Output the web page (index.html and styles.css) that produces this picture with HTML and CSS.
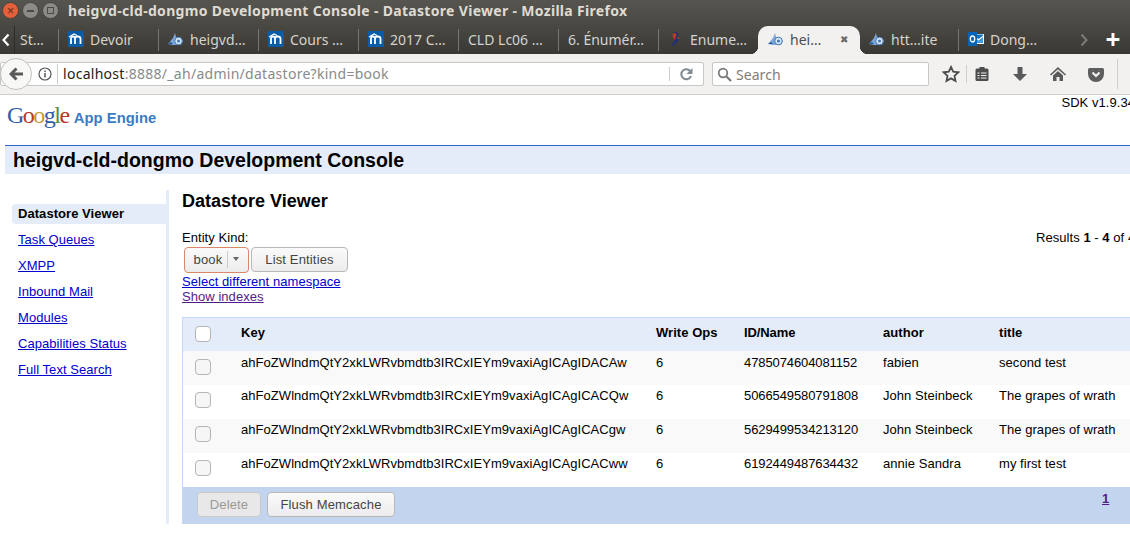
FILE: index.html
```html
<!DOCTYPE html>
<html lang="en">
<head>
  <meta charset="UTF-8">
  <title>heigvd-cld-dongmo Development Console - Datastore Viewer</title>
  <link rel="stylesheet" href="styles.css">
</head>
<body>
<svg class="defs" width="0" height="0">
  <symbol id="moodle" viewBox="0 0 16 16">
    <rect width="16" height="16" fill="#0a5ca8"/>
    <path d="M3 13V7.500C3 6 4 5.500 5 5.500s2 .5 2 2V13M7 7.500C7 6 8 5.500 9.500 5.500S12.500 6 12.500 7.500V13" fill="none" stroke="#fff" stroke-width="1.800"/>
    <path d="M1 6l5-3 3 1.500" fill="none" stroke="#fff" stroke-width="1.200"/>
  </symbol>
  <symbol id="engine" viewBox="0 0 16 16">
    <path d="M0 13L5 7l2-5 1 4 5 1 2 3-2 4H5z" fill="#7ea7d8"/>
    <circle cx="10.500" cy="10" r="3.800" fill="#dbe6f2" stroke="#3d78b8"/>
    <circle cx="10.500" cy="10" r="1.500" fill="#3d78b8"/>
    <path d="M0 13h5l-2-2z" fill="#1f5a9e"/>
  </symbol>
  <symbol id="bird" viewBox="0 0 16 16">
    <path d="M6 2c3-1 4 1 3 4L5 14c3-2 5-4 5-7" fill="none" stroke="#20307c" stroke-width="1.500"/>
    <path d="M5 3c2-2 4-1 3 2L7 9C5 7 4 5 5 3z" fill="#d92b2b"/>
    <path d="M9 6l4 2-4-.5z" fill="#d92b2b"/>
  </symbol>
</svg>

<div class="titlebar">
  <div class="winbtns">
    <span class="winbtn close">×</span>
    <span class="winbtn"><i class="dash"></i></span>
    <span class="winbtn"><i class="square"></i></span>
  </div>
  <div class="wintitle">heigvd-cld-dongmo Development Console - Datastore Viewer - Mozilla Firefox</div>
</div>

<div class="tabbar">
  <div class="tabscroll left"><svg width="8" height="14" viewBox="0 0 8 14"><path d="M6.500 1.500L1.500 7l5 5.500" fill="none" stroke="#fff" stroke-width="2.200"/></svg></div>
  <div class="tab first"><span class="tabtext">St…</span></div>
  <div class="tab"><svg class="favicon"><use href="#moodle"/></svg><span class="tabtext">Devoir</span></div>
  <div class="tab"><svg class="favicon"><use href="#engine"/></svg><span class="tabtext">heigvd…</span></div>
  <div class="tab"><svg class="favicon"><use href="#moodle"/></svg><span class="tabtext">Cours …</span></div>
  <div class="tab"><svg class="favicon"><use href="#moodle"/></svg><span class="tabtext">2017 C…</span></div>
  <div class="tab"><span class="tabtext">CLD Lc06 …</span></div>
  <div class="tab"><span class="tabtext">6. Énumér…</span></div>
  <div class="tab nosep"><svg class="favicon"><use href="#bird"/></svg><span class="tabtext">Enume…</span></div>
  <div class="tab active"><svg class="favicon"><use href="#engine"/></svg><span class="tabtext">hei…</span><span class="tabclose">✖</span></div>
  <div class="tab plain"><svg class="favicon"><use href="#engine"/></svg><span class="tabtext">htt…ite</span></div>
  <div class="tab last">
    <svg class="favicon" viewBox="0 0 16 16"><rect x="5" y="3" width="11" height="10" fill="#fff"/><path d="M6 4.500l4.500 3.500 4.500-3.500v-1H6z" fill="#0a6fc2"/><path d="M6 6l4.500 3.500L15 6v6H6z" fill="#3d9be0"/><rect y="1" width="9" height="14" fill="#0a62b0"/><ellipse cx="4.500" cy="8" rx="2.200" ry="3" fill="none" stroke="#fff" stroke-width="1.300"/></svg>
    <span class="tabtext">Dong…</span>
  </div>
  <div class="tabscroll right"><svg width="8" height="14" viewBox="0 0 8 14"><path d="M1.500 1.500l5 5.500-5 5.500" fill="none" stroke="#7d7b75" stroke-width="2"/></svg></div>
  <div class="newtab">+</div>
</div>

<div class="navbar">
  <div class="backbtn"><svg width="15" height="14" viewBox="0 0 15 14"><path d="M7.500 1.500L2 7l5.500 5.500M2.500 7H14" fill="none" stroke="#5a5a5a" stroke-width="3"/></svg></div>
  <div class="urlbar">
    <svg class="infoicon" width="14" height="14" viewBox="0 0 14 14"><circle cx="7" cy="7" r="6" fill="none" stroke="#555" stroke-width="1.200"/><path d="M7 6v4.500M7 3.500v1.400" stroke="#555" stroke-width="1.500"/></svg>
    <span class="urltext"><b>localhost</b>:8888/_ah/admin/datastore?kind=book</span>
    <svg class="reload" width="14" height="14" viewBox="0 0 14 14"><path d="M12 5.500A5 5 0 1 0 12 9" fill="none" stroke="#7f8a92" stroke-width="2"/><path d="M13.500 1v6h-6z" fill="#7f8a92"/></svg>
  </div>
  <div class="searchbar">
    <svg width="15" height="15" viewBox="0 0 15 15"><circle cx="6" cy="6" r="4.300" fill="none" stroke="#777" stroke-width="1.700"/><path d="M9.500 9.500l4.500 4.500" stroke="#777" stroke-width="2.200"/></svg>
    <span>Search</span>
  </div>
  <div class="navicons">
    <svg class="staricon" width="18" height="18" viewBox="0 0 18 18"><path d="M9 2l2.200 4.700 5.100.6-3.800 3.500 1 5.100L9 13.400 4.500 15.900l1-5.100L1.700 7.300l5.100-.6z" fill="none" stroke="#4d4d4d" stroke-width="1.800"/></svg>
    <span class="navsep"></span>
    <svg class="navicon" width="16" height="16" viewBox="0 0 16 16"><rect x="1.500" y="2.500" width="13" height="12.500" rx="1.500" fill="#4d4d4d"/><rect x="5.500" y="1" width="5" height="3" fill="#4d4d4d"/><path d="M3.500 7h2M7 7h5.500M3.500 9.500h2M7 9.500h5.500M3.500 12h2M7 12h5.500" stroke="#f2f1f0" stroke-width="1.100"/></svg>
    <svg class="navicon tight" width="16" height="16" viewBox="0 0 16 16"><path d="M5.500 1h5v7H15l-7 7-7-7h4.500z" fill="#5a5a5a"/></svg>
    <svg class="navicon tight" width="18" height="16" viewBox="0 0 18 16"><path d="M9 1L1 8.500l1 1L9 3.300l7 6.200 1-1z" fill="#5a5a5a"/><path d="M4 9.500L9 5l5 4.500V15h-3.500v-4h-3v4H4z" fill="#5a5a5a"/></svg>
    <svg class="navicon pocket" width="16" height="15" viewBox="0 0 16 15"><path d="M1.500 1h13A1.500 1.500 0 0 1 16 2.500V7a8 8 0 0 1-16 0V2.500A1.500 1.500 0 0 1 1.500 1z" fill="#5e5e5e"/><path d="M4.500 5.500L8 9l3.500-3.500" fill="none" stroke="#f2f1f0" stroke-width="2.200"/></svg>
    <span class="navsep last"></span>
  </div>
</div>

<div class="page">
  <div class="pagetop">
    <div class="logo">
      <span class="google"><span class="g-blue">G</span><span class="g-red">o</span><span class="g-yellow">o</span><span class="g-blue">g</span><span class="g-green">l</span><span class="g-red">e</span></span>
      <span class="appengine">App Engine</span>
    </div>
    <div class="sdk">SDK v1.9.34</div>
  </div>

  <h1 class="consoletitle">heigvd-cld-dongmo Development Console</h1>

  <div class="columns">
    <ul class="sidemenu">
      <li class="current">Datastore Viewer</li>
      <li><a href="#">Task Queues</a></li>
      <li><a href="#">XMPP</a></li>
      <li><a href="#">Inbound Mail</a></li>
      <li><a href="#">Modules</a></li>
      <li><a href="#">Capabilities Status</a></li>
      <li><a href="#">Full Text Search</a></li>
    </ul>

    <div class="content">
      <h2>Datastore Viewer</h2>
      <div class="kindrow">
        <div class="kindform">
          <div class="kindlabel">Entity Kind:</div>
          <div class="kindcontrols">
            <span class="btn kindselect"><span class="kindname">book</span><span class="caret"></span></span>
            <span class="btn listbtn">List Entities</span>
          </div>
          <a class="small-link" href="#">Select different namespace</a>
          <a class="small-link visited" href="#">Show indexes</a>
        </div>
        <div class="results">Results <b>1</b> - <b>4</b> of 4</div>
      </div>

      <div class="grid">
        <div class="gridrow head">
          <span class="checkcell"><span class="check"></span></span>
          <span class="keycell">Key</span><span class="opscell">Write Ops</span><span class="idcell">ID/Name</span><span class="authorcell">author</span><span>title</span>
        </div>
        <div class="gridrow odd toprow">
          <span class="checkcell"><span class="check"></span></span>
          <span class="keycell">ahFoZWlndmQtY2xkLWRvbmdtb3IRCxIEYm9vaxiAgICAgIDACAw</span><span class="opscell">6</span><span class="idcell">4785074604081152</span><span class="authorcell">fabien</span><span>second test</span>
        </div>
        <div class="gridrow">
          <span class="checkcell"><span class="check"></span></span>
          <span class="keycell">ahFoZWlndmQtY2xkLWRvbmdtb3IRCxIEYm9vaxiAgICAgICACQw</span><span class="opscell">6</span><span class="idcell">5066549580791808</span><span class="authorcell">John Steinbeck</span><span>The grapes of wrath</span>
        </div>
        <div class="gridrow odd">
          <span class="checkcell"><span class="check"></span></span>
          <span class="keycell">ahFoZWlndmQtY2xkLWRvbmdtb3IRCxIEYm9vaxiAgICAgICACgw</span><span class="opscell">6</span><span class="idcell">5629499534213120</span><span class="authorcell">John Steinbeck</span><span>The grapes of wrath</span>
        </div>
        <div class="gridrow">
          <span class="checkcell"><span class="check"></span></span>
          <span class="keycell">ahFoZWlndmQtY2xkLWRvbmdtb3IRCxIEYm9vaxiAgICAgICACww</span><span class="opscell">6</span><span class="idcell">6192449487634432</span><span class="authorcell">annie Sandra</span><span>my first test</span>
        </div>
        <div class="gridfoot">
          <span class="btn footbtn deletebtn">Delete</span>
          <span class="btn footbtn flushbtn">Flush Memcache</span>
          <a class="pagelink" href="#">1</a>
        </div>
      </div>
    </div>
  </div>
</div>
</body>
</html>
```

FILE: styles.css
```css
html, body {
  margin: 0;
  padding: 0;
  height: 550px;
  overflow: hidden;
  background: #fff;
  font-family: "Liberation Sans", Arial, sans-serif;
  font-size: 13px;
  letter-spacing: 0.05px;
  color: #000;
}

.defs {
  display: block;
  height: 0;
}

/* window title */
.titlebar {
  height: 26px;
  box-sizing: border-box;
  padding-bottom: 5px;
  display: flex;
  align-items: center;
  background: linear-gradient(#575550, #4a4843);
}

.winbtns {
  display: flex;
  gap: 3px;
  margin-left: 2px;
  width: 66px;
}

.winbtn {
  width: 15px;
  height: 15px;
  border-radius: 50%;
  background: #8c8a84;
  border: 1px solid #45433f;
  display: flex;
  align-items: center;
  justify-content: center;
  color: #5a2a1a;
  font-size: 12px;
  line-height: 1;
}

.winbtn.close {
  background: #e2613a;
}

.dash {
  width: 7px;
  height: 2px;
  background: #4b4a46;
}

.square {
  width: 5px;
  height: 5px;
  border: 1px solid #4b4a46;
}

.wintitle {
  color: #dfdbd2;
  font-family: "Noto Sans", sans-serif;
  font-weight: 700;
  font-size: 14px;
  letter-spacing: 0.31px;
  white-space: nowrap;
}

/* tabs */
.tabbar {
  height: 28px;
  display: flex;
  align-items: stretch;
  background: linear-gradient(#4a4843, #393834);
  font-family: "Noto Sans", sans-serif;
  font-size: 14px;
  letter-spacing: 0;
  color: #d6d3cc;
}

.tabbar > div {
  flex: none;
}

.tabscroll {
  display: flex;
  align-items: center;
  justify-content: center;
}

.tabscroll.left {
  width: 11px;
  padding-right: 3px;
  border-right: 1px solid #2c2b28;
}

.tabscroll.right {
  width: 18px;
  margin-left: 9px;
}

.tab {
  width: 100px;
  box-sizing: border-box;
  display: flex;
  align-items: center;
  gap: 6px;
  padding: 0 0 2px 10px;
  white-space: nowrap;
  position: relative;
}

.tab::after {
  content: "";
  position: absolute;
  right: -1px;
  top: 3px;
  bottom: 3px;
  width: 1px;
  background: #77756f;
}

.tab.nosep::after,
.tab.last::after {
  display: none;
}

.tab.first {
  width: 43px;
  padding-left: 5px;
}

.tab.active {
  width: 102px;
  background: #f2f1f0;
  border-radius: 10px 10px 0 0;
  color: #4d4d4d;
}

.tab.active::before,
.tab.active::after {
  content: "";
  position: absolute;
  top: auto;
  bottom: 0;
  width: 8px;
  height: 8px;
  background: radial-gradient(circle at 0 0, transparent 8px, #f2f1f0 8.500px);
}

.tab.active::before {
  left: -8px;
  right: auto;
}

.tab.active::after {
  right: -8px;
  background: radial-gradient(circle at 100% 0, transparent 8px, #f2f1f0 8.500px);
}

.favicon {
  width: 16px;
  height: 16px;
  flex: none;
}

.tab.plain {
  width: 98px;
  padding-left: 9px;
}

.tab.last {
  width: 108px;
}

.tabclose {
  font-size: 10px;
  color: #6a6a6a;
  margin-left: 13px;
}

.newtab {
  width: 30px;
  margin-left: 5px;
  text-align: center;
  color: #fff;
  font-size: 26px;
  font-weight: 700;
  line-height: 26px;
}

/* toolbar */
.navbar {
  height: 41px;
  box-sizing: border-box;
  display: flex;
  align-items: center;
  background: #f2f1f0;
  border-bottom: 1px solid #cfcdca;
  position: relative;
}

.backbtn {
  position: absolute;
  left: 0;
  top: 4px;
  width: 30px;
  height: 30px;
  border: 1px solid #c4c2bf;
  border-radius: 50%;
  background: #f8f8f7;
  display: flex;
  align-items: center;
  justify-content: center;
}

.urlbar {
  width: 704px;
  height: 24px;
  box-sizing: border-box;
  padding-left: 37px;
  display: flex;
  align-items: center;
  background: #fff;
  border: 1px solid #c9c7c4;
  border-radius: 2px;
}

.infoicon {
  flex: none;
}

.urltext {
  margin-left: 5px;
  padding-left: 5px;
  border-left: 1px solid #ccc;
  font-family: "Noto Sans", sans-serif;
  font-size: 14px;
  letter-spacing: 0.28px;
  line-height: 20px;
  color: #8a8a8a;
  flex: 1;
}

.urltext b {
  font-weight: 400;
  color: #222;
}

.reload {
  padding: 0 10px 0 9px;
  border-left: 1px solid #ccc;
}

.searchbar {
  margin-left: 8px;
  width: 217px;
  height: 24px;
  box-sizing: border-box;
  padding-left: 4px;
  display: flex;
  align-items: center;
  gap: 4px;
  background: #fff;
  border: 1px solid #c9c7c4;
  border-radius: 2px;
  font-family: "Noto Sans", sans-serif;
  font-size: 14px;
  color: #7d7d7d;
}

.navicons {
  display: flex;
  align-items: center;
  margin-left: 13px;
}

.navsep {
  width: 1px;
  height: 18px;
  background: #d0cecb;
  margin: 0 7px 0 6px;
}

.navsep.last {
  height: 30px;
  margin: 0 0 0 13px;
}

.navicon {
  margin-right: 22px;
}

.navicon.tight {
  margin-right: 21px;
}

.navicon.pocket {
  margin-right: 0;
}

/* page */
.page {
  width: 1135px;
  padding-left: 5px;
  box-sizing: border-box;
}

.pagetop {
  height: 50px;
  display: flex;
  justify-content: space-between;
  align-items: flex-start;
}

.logo {
  display: flex;
  align-items: baseline;
  gap: 5px;
  margin: 7px 0 0 2px;
}

.google {
  font-family: "Liberation Serif", serif;
  font-size: 24px;
  letter-spacing: -1.500px;
}

.g-blue { color: #2f5da8; }
.g-red { color: #b8372a; }
.g-yellow { color: #c79a2c; }
.g-green { color: #4d8f3f; }

.appengine {
  font-size: 14.800px;
  font-weight: 700;
  color: #3a7cc4;
}

.sdk {
  line-height: 15px;
}

.consoletitle {
  margin: 0;
  height: 29px;
  box-sizing: border-box;
  padding-left: 8px;
  background: #e5ecf9;
  border-top: 1px solid #36c;
  font-size: 19.500px;
  letter-spacing: 0;
  line-height: 28px;
  font-weight: 700;
}

.columns {
  display: flex;
  margin-top: 16px;
}

.sidemenu {
  list-style: none;
  margin: 0;
  padding: 14px 0 0 7px;
  width: 154px;
  height: 320px;
  border-right: 3px solid #e5ecf9;
}

.sidemenu li {
  height: 20px;
  margin-bottom: 6px;
  line-height: 20px;
  padding-left: 6px;
}

.sidemenu .current {
  background: #e5ecf9;
  font-weight: 700;
  border-radius: 4px 0 0 4px;
}

a {
  color: #00c;
}

.content {
  flex: 1;
  margin-left: 13px;
  padding-top: 1px;
  min-width: 0;
}

.content h2 {
  margin: 0;
  font-size: 18px;
  letter-spacing: 0;
  line-height: 21px;
}

.kindrow {
  display: flex;
  justify-content: space-between;
  margin-top: 18px;
  height: 87px;
}

.kindlabel {
  line-height: 15px;
}

.kindcontrols {
  display: flex;
  gap: 2px;
  margin: 2px 0 1px 2px;
}

.btn {
  display: inline-flex;
  align-items: center;
  justify-content: center;
  box-sizing: border-box;
  height: 25px;
  border: 1px solid #b8b8b8;
  border-radius: 4px;
  background: linear-gradient(#fafafa, #ececec);
  color: #444;
  font-size: 13px;
  letter-spacing: 0.15px;
  white-space: nowrap;
}

.kindselect {
  width: 65px;
  height: 26px;
  padding-bottom: 2px;
  border-color: #d9866a;
  gap: 5px;
}

.kindname {
  padding-right: 5px;
  border-right: 1px solid #ccc;
  line-height: 17px;
}

.caret {
  width: 0;
  height: 0;
  border-left: 3px solid transparent;
  border-right: 3px solid transparent;
  border-top: 4px solid #666;
}

.listbtn {
  width: 97px;
}

.small-link {
  display: block;
  line-height: 15px;
}

.visited,
.pagelink {
  color: #551a8b;
}

.results {
  width: 99px;
  white-space: nowrap;
  line-height: 15px;
}

/* entity table */
.grid {
  border-top: 1px solid #c3d9ff;
  border-left: 1px solid #c3d9ff;
}

.gridrow {
  height: 34px;
  display: flex;
  align-items: center;
  white-space: nowrap;
}

.gridrow.head {
  height: 33px;
  background: #e5ecf9;
  font-weight: 700;
}

.gridrow.odd {
  background: #f9f9f9;
}

.gridrow > span {
  padding-bottom: 13px;
}

.gridrow.toprow > span {
  padding-bottom: 11px;
}

.gridrow.head > span {
  padding-bottom: 4px;
}

.gridrow > .checkcell,
.gridrow.toprow > .checkcell,
.gridrow.head > .checkcell {
  width: 58px;
  padding: 0 0 0 12px;
  box-sizing: border-box;
  display: flex;
}

.check {
  width: 16px;
  height: 16px;
  box-sizing: border-box;
  border: 1px solid #b5b5b5;
  border-radius: 4px;
  background: #f6f6f6;
  margin-bottom: 4px;
}

.toprow .check {
  margin-bottom: 2px;
}

.head .check {
  margin-bottom: 1px;
  background: #fff;
}

.keycell {
  width: 415px;
}

.opscell {
  width: 88px;
}

.idcell {
  width: 139px;
  letter-spacing: -0.1px;
}

.authorcell {
  width: 116px;
}

.gridfoot {
  height: 37px;
  box-sizing: border-box;
  padding: 0 0 2px 14px;
  display: flex;
  align-items: center;
  gap: 6px;
  background: #c3d5ee;
  position: relative;
}

.deletebtn {
  width: 64px;
  color: #999;
  background: #e8e8e8;
  border-color: #c9c9c9;
}

.flushbtn {
  width: 128px;
}

.pagelink {
  position: absolute;
  left: 919px;
  top: 4px;
  font-weight: 700;
}
```
